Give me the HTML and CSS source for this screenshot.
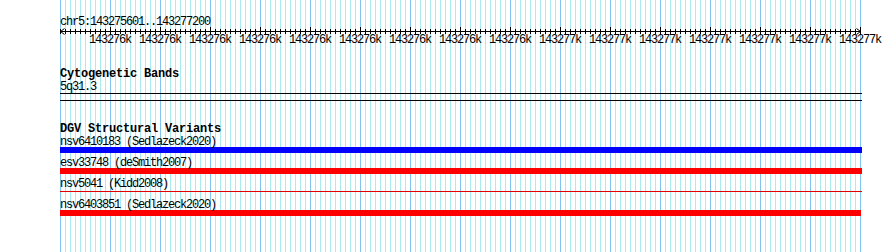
FILE: index.html
```html
<!DOCTYPE html>
<html lang="en">
<head>
    <meta charset="UTF-8">
    <title>chr5:143275601..143277200</title>
    <link rel="stylesheet" href="styles.css">
</head>
<body>
    <div class="panel">
        <!-- ruler -->
        <div class="ruler-title">chr5:143275601..143277200</div>
        <svg class="ruler" width="802" height="7" shape-rendering="crispEdges">
            <defs>
                <pattern id="minor" width="5" height="7" patternUnits="userSpaceOnUse">
                    <rect x="0" y="2" width="1" height="5" fill="#000"/>
                </pattern>
                <pattern id="major" width="50" height="7" patternUnits="userSpaceOnUse">
                    <rect x="0" y="0" width="1" height="7" fill="#000"/>
                </pattern>
            </defs>
            <rect x="0" y="0" width="801" height="7" fill="url(#minor)"/>
            <rect x="50" y="0" width="751" height="7" fill="url(#major)"/>
            <rect x="0" y="4" width="801" height="1" fill="#000"/>
            <path d="M0.5 4.5 L4.5 1.5 M0.5 4.5 L4.5 7.5 M800.5 4.5 L796.5 1.5 M800.5 4.5 L796.5 7.5" stroke="#000" fill="none" shape-rendering="auto"/>
        </svg>
        <div class="ruler-labels">
            <span>143276k</span><span>143276k</span><span>143276k</span><span>143276k</span>
            <span>143276k</span><span>143276k</span><span>143276k</span><span>143276k</span>
            <span>143276k</span><span>143277k</span><span>143277k</span><span>143277k</span>
            <span>143277k</span><span>143277k</span><span>143277k</span><span>143277k</span>
        </div>

        <!-- cytogenetic bands -->
        <div class="track-title cyto-title">Cytogenetic Bands</div>
        <div class="feature-label">5q31.3</div>
        <div class="cyto-band"></div>

        <!-- DGV -->
        <div class="track-title dgv-title">DGV Structural Variants</div>
        <div class="feature">
            <div class="feature-label">nsv6410183 (Sedlazeck2020)</div>
            <div class="bar blue"></div>
        </div>
        <div class="feature">
            <div class="feature-label">esv33748 (deSmith2007)</div>
            <div class="bar red"></div>
        </div>
        <div class="feature">
            <div class="feature-label">nsv5041 (Kidd2008)</div>
            <div class="bar thin"></div>
        </div>
        <div class="feature">
            <div class="feature-label">nsv6403851 (Sedlazeck2020)</div>
            <div class="bar red short"></div>
        </div>
    </div>
</body>
</html>
```

FILE: styles.css
```css
body {
    margin: 0;
    background-color: #ffffff;
    font-family: 'Liberation Mono', 'DejaVu Sans Mono', monospace;
    font-size: 12px;
    letter-spacing: -1.2px;
    color: #000000;
    overflow: hidden;
}

.panel {
    margin-left: 60px;
    width: 802px;
    height: 252px;
    background-image:
        repeating-linear-gradient(to right, #80c4f0 0 1px, transparent 1px 50px),
        repeating-linear-gradient(to right, #a8ecf0 0 1px, transparent 1px 5px);
    background-size: 801px 100%;
    background-repeat: no-repeat;
}

.ruler-title {
    padding-top: 15px;
    height: 12px;
    line-height: 14px;
}

.ruler {
    display: block;
    overflow: visible;
}

.ruler-labels {
    display: flex;
    margin-left: 25px;
    height: 13px;
    line-height: 13px;
    white-space: nowrap;
}

.ruler-labels span {
    flex: 0 0 50px;
    text-align: center;
}

.track-title {
    font-weight: bold;
    letter-spacing: -0.2px;
}

.cyto-title {
    margin-top: 20px;
    padding-top: 1px;
    height: 12px;
    line-height: 13px;
}

.feature-label {
    height: 12px;
    line-height: 15px;
    white-space: nowrap;
}

.cyto-band {
    margin-top: 1px;
    height: 6px;
    border-top: 1px solid #000;
    border-bottom: 1px solid #000;
}

.dgv-title {
    margin-top: 20px;
    height: 14px;
    line-height: 16px;
}

.feature {
    padding-bottom: 3px;
}

.bar {
    height: 6px;
}

.bar.blue {
    background-color: #0000ff;
}

.bar.red {
    background-color: #ff0000;
}

.bar.short {
    width: 801px;
}

.bar.thin {
    height: 1px;
    margin: 2px 0 3px;
    background-color: #e00000;
}
```
